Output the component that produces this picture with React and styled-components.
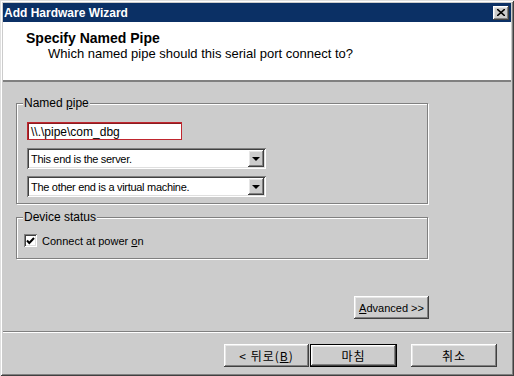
import React from "react";
import styled, { createGlobalStyle, css } from "styled-components";

const GlobalStyle = createGlobalStyle`
  html, body {
    margin: 0;
    padding: 0;
    background: #cccccc;
  }
  body {
    font-family: "Liberation Sans", Arial, sans-serif;
    font-size: 12px;
    color: #000;
  }
  * {
    box-sizing: border-box;
  }
`;

const raised = css`
  background: #cccccc;
  box-shadow: inset -1px -1px 0 #404040, inset 1px 1px 0 #ffffff,
    inset -2px -2px 0 #808080, inset 2px 2px 0 #e6e6e6;
`;

const sunken = css`
  background: #ffffff;
  box-shadow: inset 1px 1px 0 #808080, inset -1px -1px 0 #ffffff,
    inset 2px 2px 0 #404040, inset -2px -2px 0 #dfdfdf;
`;

const Window = styled.div`
  width: 514px;
  height: 376px;
  padding: 3px;
  display: flex;
  flex-direction: column;
  background: #cccccc;
  box-shadow: inset 1px 1px 0 #dfdfdf, inset -1px -1px 0 #404040,
    inset 2px 2px 0 #ffffff, inset -2px -2px 0 #808080;
`;

const TitleBar = styled.div`
  height: 19px;
  display: flex;
  align-items: center;
  justify-content: space-between;
  padding: 0 2px 0 1px;
  background: #0b3065;
  color: #ffffff;
  font-weight: bold;
  font-size: 12px;
`;

const CloseButton = styled.div`
  ${raised};
  width: 16px;
  height: 14px;
  display: flex;
  align-items: center;
  justify-content: center;
`;

const Header = styled.div`
  height: 60px;
  background: #ffffff;
  padding: 8px 0 0 23px;
  box-shadow: inset 0 -2px 0 #808080, inset 0 -1px 0 #ffffff;
`;

const HeaderTitle = styled.div`
  font-weight: bold;
  font-size: 14px;
  line-height: 16px;
`;

const HeaderSub = styled.div`
  margin: 0 0 0 22px;
  font-size: 13px;
  line-height: 16px;
`;

const Body = styled.div`
  flex: 1;
  display: flex;
  flex-direction: column;
  padding: 14px 0 12px 13px;
`;

const Group = styled.fieldset`
  width: 412px;
  margin: ${(p) => p.$top || 0}px 0 0 0;
  padding: 0;
  border: 1px solid #808080;
  box-shadow: 1px 1px 0 #ffffff, inset 1px 1px 0 #ffffff;
`;

const GroupContent = styled.div`
  padding: ${(p) => p.$pad};
  display: flex;
  flex-direction: column;
  align-items: flex-start;
`;

const Legend = styled.legend`
  margin-left: 6px;
  padding: 0 1px;
  line-height: 14px;
  background: #cccccc;
`;

const TextBox = styled.div`
  width: 155px;
  height: 18px;
  padding: 1px 3px 0;
  line-height: 16px;
  background: #ffffff;
  border: 1px solid #c0262e;
  box-shadow: inset 1px 1px 0 #8a1c20;
`;

const Select = styled.div`
  ${sunken};
  width: 239px;
  height: 21px;
  margin-top: ${(p) => p.$top}px;
  padding: 2px 2px 2px 4px;
  display: flex;
  align-items: center;
  justify-content: space-between;
  font-size: 11px;
  letter-spacing: -0.3px;
`;

const ArrowButton = styled.div`
  ${raised};
  width: 16px;
  height: 17px;
  display: flex;
  align-items: center;
  justify-content: center;
`;

const Arrow = styled.div`
  width: 0;
  height: 0;
  border-left: 4px solid transparent;
  border-right: 4px solid transparent;
  border-top: 4px solid #000000;
`;

const CheckRow = styled.label`
  display: flex;
  align-items: center;
  gap: 5px;
  font-size: 11px;
`;

const CheckBox = styled.span`
  ${sunken};
  width: 13px;
  height: 13px;
  display: flex;
  align-items: center;
  justify-content: center;
`;

const U = styled.span`
  text-decoration: underline;
`;

const ButtonRow = styled.div`
  display: flex;
  justify-content: flex-end;
  width: 413px;
  margin-top: auto;
`;

const Button = styled.div`
  ${raised};
  width: ${(p) => p.$w || 85}px;
  height: 23px;
  margin-left: ${(p) => p.$gap || 0}px;
  display: flex;
  align-items: center;
  justify-content: center;
  font-family: ${(p) =>
    p.$kr
      ? `"Noto Sans CJK KR", "Liberation Sans", sans-serif`
      : `"Liberation Sans", Arial, sans-serif`};
  font-size: ${(p) => (p.$kr ? 12 : 11)}px;
  letter-spacing: ${(p) => (p.$kr ? "1px" : "0")};
  ${(p) =>
    p.$default &&
    css`
      border: 1px solid #000000;
    `}
`;

const Footer = styled.div`
  height: 42px;
  padding: 13px 14px 6px 0;
  display: flex;
  justify-content: flex-end;
  box-shadow: inset 0 1px 0 #808080, inset 0 2px 0 #ffffff;
`;

export default function App() {
  return (
    <>
      <GlobalStyle />
      <Window>
        <TitleBar>
          <span>Add Hardware Wizard</span>
          <CloseButton>
            <svg width="8" height="7" viewBox="0 0 8 7">
              <path d="M0 0 L8 7 M8 0 L0 7" stroke="#000" strokeWidth="1.6" />
            </svg>
          </CloseButton>
        </TitleBar>
        <Header>
          <HeaderTitle>Specify Named Pipe</HeaderTitle>
          <HeaderSub>Which named pipe should this serial port connect to?</HeaderSub>
        </Header>
        <Body>
          <Group>
            <Legend>
              Named <U>p</U>ipe
            </Legend>
            <GroupContent $pad="12px 10px 6px">
              <TextBox>\\.\pipe\com_dbg</TextBox>
              <Select $top={8}>
                <span>This end is the server.</span>
                <ArrowButton>
                  <Arrow />
                </ArrowButton>
              </Select>
              <Select $top={7}>
                <span>The other end is a virtual machine.</span>
                <ArrowButton>
                  <Arrow />
                </ArrowButton>
              </Select>
            </GroupContent>
          </Group>
          <Group $top={6}>
            <Legend>Device status</Legend>
            <GroupContent $pad="10px 7px 11px">
              <CheckRow>
                <CheckBox>
                  <svg width="9" height="8" viewBox="0 0 9 8">
                    <path d="M1 3.5 L3.3 6 L8 1" fill="none" stroke="#000" strokeWidth="2" />
                  </svg>
                </CheckBox>
                <span>
                  Connect at power <U>o</U>n
                </span>
              </CheckRow>
            </GroupContent>
          </Group>
          <ButtonRow>
            <Button $w={75}>
              <span>
                <U>A</U>dvanced &gt;&gt;
              </span>
            </Button>
          </ButtonRow>
        </Body>
        <Footer>
          <Button $kr>
            <span>
              &lt; 뒤로(<U>B</U>)
            </span>
          </Button>
          <Button $kr $default $w={87} $gap={1}>
            마침
          </Button>
          <Button $kr $w={86} $gap={14}>
            취소
          </Button>
        </Footer>
      </Window>
    </>
  );
}
